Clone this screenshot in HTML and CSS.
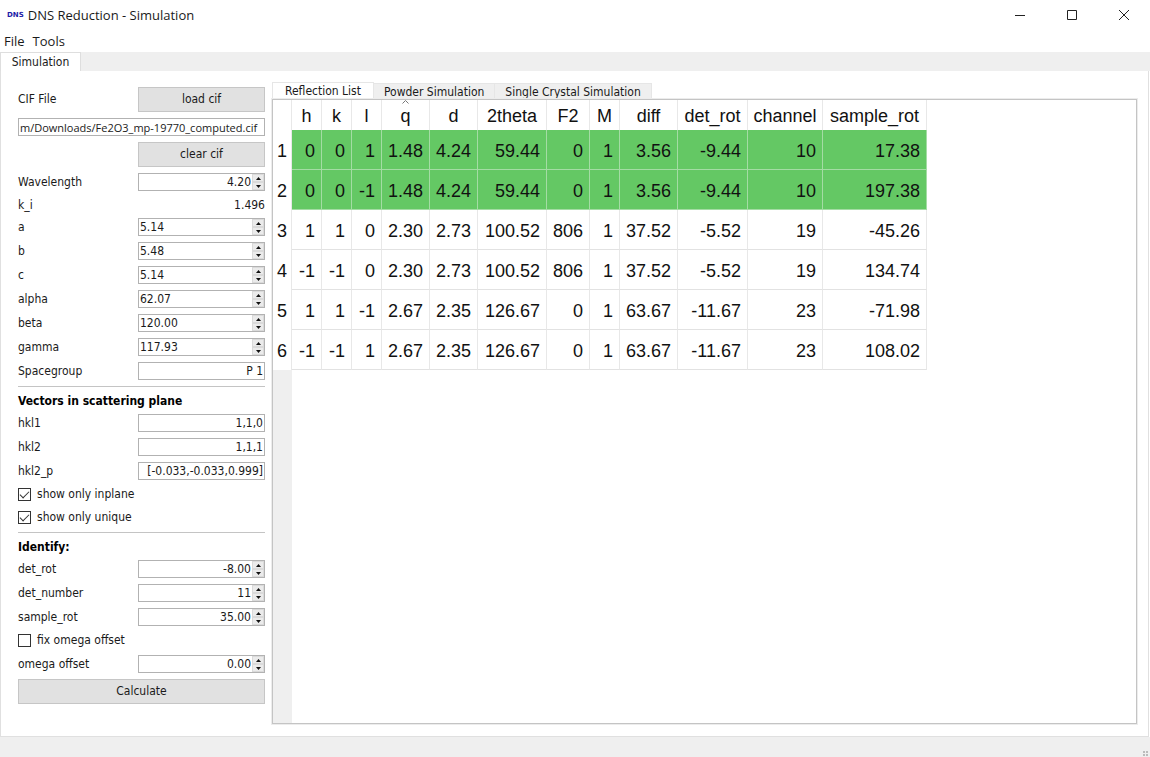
FILE: index.html
```html
<!DOCTYPE html>
<html lang="en">
<head>
<meta charset="utf-8">
<title>DNS Reduction - Simulation</title>
<link rel="stylesheet" href="styles.css">
</head>
<body>
<header class="titlebar">
  <span class="logo">DNS</span>
  <h1 class="title">DNS Reduction - Simulation</h1>
  <div class="window-buttons">
    <button class="window-button" aria-label="Minimize"><svg width="12" height="12" viewBox="0 0 12 12"><path d="M1 6.5h10"/></svg></button>
    <button class="window-button" aria-label="Maximize"><svg width="12" height="12" viewBox="0 0 12 12"><path d="M1.5 1.5h9v9h-9z"/></svg></button>
    <button class="window-button" aria-label="Close"><svg width="12" height="12" viewBox="0 0 12 12"><path d="M1 1l10 10M11 1L1 11"/></svg></button>
  </div>
</header>
<nav class="menubar">
  <button class="menu">File</button>
  <button class="menu">Tools</button>
</nav>
<div class="main-tabs" role="tablist">
  <button class="main-tab" role="tab" aria-selected="true">Simulation</button>
</div>
<main class="page">
  <form class="form">
    <div class="row"><label for="load">CIF File</label><button type="button" class="push" id="load">load cif</button></div>
    <input class="field path" aria-label="CIF path" value="m/Downloads/Fe2O3_mp-19770_computed.cif">
    <div class="row"><span></span><button type="button" class="push">clear cif</button></div>
    <div class="row"><label for="wavelength">Wavelength</label><div class="spin right"><input type="number" step="0.01" id="wavelength" value="4.20"><span class="steps"><button type="button" class="step" aria-label="Up"><svg viewBox="0 0 5 3"><path d="M0 3L2.500 0L5 3z"/></svg></button><button type="button" class="step" aria-label="Down"><svg viewBox="0 0 5 3"><path d="M0 0h5L2.500 3z"/></svg></button></span></div></div>
    <div class="row text-row"><span>k_i</span><output class="result">1.496</output></div>
    <div class="row"><label for="a">a</label><div class="spin"><input type="number" step="0.01" id="a" value="5.14"><span class="steps"><button type="button" class="step" aria-label="Up"><svg viewBox="0 0 5 3"><path d="M0 3L2.500 0L5 3z"/></svg></button><button type="button" class="step" aria-label="Down"><svg viewBox="0 0 5 3"><path d="M0 0h5L2.500 3z"/></svg></button></span></div></div>
    <div class="row"><label for="b">b</label><div class="spin"><input type="number" step="0.01" id="b" value="5.48"><span class="steps"><button type="button" class="step" aria-label="Up"><svg viewBox="0 0 5 3"><path d="M0 3L2.500 0L5 3z"/></svg></button><button type="button" class="step" aria-label="Down"><svg viewBox="0 0 5 3"><path d="M0 0h5L2.500 3z"/></svg></button></span></div></div>
    <div class="row"><label for="c">c</label><div class="spin"><input type="number" step="0.01" id="c" value="5.14"><span class="steps"><button type="button" class="step" aria-label="Up"><svg viewBox="0 0 5 3"><path d="M0 3L2.500 0L5 3z"/></svg></button><button type="button" class="step" aria-label="Down"><svg viewBox="0 0 5 3"><path d="M0 0h5L2.500 3z"/></svg></button></span></div></div>
    <div class="row"><label for="alpha">alpha</label><div class="spin"><input type="number" step="0.01" id="alpha" value="62.07"><span class="steps"><button type="button" class="step" aria-label="Up"><svg viewBox="0 0 5 3"><path d="M0 3L2.500 0L5 3z"/></svg></button><button type="button" class="step" aria-label="Down"><svg viewBox="0 0 5 3"><path d="M0 0h5L2.500 3z"/></svg></button></span></div></div>
    <div class="row"><label for="beta">beta</label><div class="spin"><input type="number" step="0.01" id="beta" value="120.00"><span class="steps"><button type="button" class="step" aria-label="Up"><svg viewBox="0 0 5 3"><path d="M0 3L2.500 0L5 3z"/></svg></button><button type="button" class="step" aria-label="Down"><svg viewBox="0 0 5 3"><path d="M0 0h5L2.500 3z"/></svg></button></span></div></div>
    <div class="row"><label for="gamma">gamma</label><div class="spin"><input type="number" step="0.01" id="gamma" value="117.93"><span class="steps"><button type="button" class="step" aria-label="Up"><svg viewBox="0 0 5 3"><path d="M0 3L2.500 0L5 3z"/></svg></button><button type="button" class="step" aria-label="Down"><svg viewBox="0 0 5 3"><path d="M0 0h5L2.500 3z"/></svg></button></span></div></div>
    <div class="row"><label for="spacegroup">Spacegroup</label><input class="field right" id="spacegroup" value="P 1"></div>
    <hr class="rule">
    <h2 class="heading">Vectors in scattering plane</h2>
    <div class="row"><label for="hkl1">hkl1</label><input class="field right" id="hkl1" value="1,1,0"></div>
    <div class="row"><label for="hkl2">hkl2</label><input class="field right" id="hkl2" value="1,1,1"></div>
    <div class="row"><label for="hkl2p">hkl2_p</label><input class="field right" id="hkl2p" value="[-0.033,-0.033,0.999]"></div>
    <label class="check"><input type="checkbox" checked>show only inplane</label>
    <label class="check"><input type="checkbox" checked>show only unique</label>
    <hr class="rule">
    <h2 class="heading">Identify:</h2>
    <div class="row"><label for="detrot">det_rot</label><div class="spin right"><input type="number" step="0.01" id="detrot" value="-8.00"><span class="steps"><button type="button" class="step" aria-label="Up"><svg viewBox="0 0 5 3"><path d="M0 3L2.500 0L5 3z"/></svg></button><button type="button" class="step" aria-label="Down"><svg viewBox="0 0 5 3"><path d="M0 0h5L2.500 3z"/></svg></button></span></div></div>
    <div class="row"><label for="detnumber">det_number</label><div class="spin right"><input type="number" id="detnumber" value="11"><span class="steps"><button type="button" class="step" aria-label="Up"><svg viewBox="0 0 5 3"><path d="M0 3L2.500 0L5 3z"/></svg></button><button type="button" class="step" aria-label="Down"><svg viewBox="0 0 5 3"><path d="M0 0h5L2.500 3z"/></svg></button></span></div></div>
    <div class="row"><label for="samplerot">sample_rot</label><div class="spin right"><input type="number" step="0.01" id="samplerot" value="35.00"><span class="steps"><button type="button" class="step" aria-label="Up"><svg viewBox="0 0 5 3"><path d="M0 3L2.500 0L5 3z"/></svg></button><button type="button" class="step" aria-label="Down"><svg viewBox="0 0 5 3"><path d="M0 0h5L2.500 3z"/></svg></button></span></div></div>
    <label class="check"><input type="checkbox">fix omega offset</label>
    <div class="row"><label for="omega">omega offset</label><div class="spin right"><input type="number" step="0.01" id="omega" value="0.00"><span class="steps"><button type="button" class="step" aria-label="Up"><svg viewBox="0 0 5 3"><path d="M0 3L2.500 0L5 3z"/></svg></button><button type="button" class="step" aria-label="Down"><svg viewBox="0 0 5 3"><path d="M0 0h5L2.500 3z"/></svg></button></span></div></div>
    <button type="button" class="push">Calculate</button>
  </form>
  <section class="results">
    <div class="tabs" role="tablist">
      <button class="tab selected" role="tab" aria-selected="true">Reflection List</button>
      <button class="tab" role="tab">Powder Simulation</button>
      <button class="tab" role="tab">Single Crystal Simulation</button>
    </div>
    <div class="sheet">
      <table class="grid">
        <colgroup><col class="w-index"><col class="w-hkl"><col class="w-hkl"><col class="w-hkl"><col class="w-q"><col class="w-q"><col class="w-theta"><col class="w-f2"><col class="w-hkl"><col class="w-diff"><col class="w-det"><col class="w-channel"><col class="w-sample"></colgroup>
        <thead>
          <tr><td></td><th>h</th><th>k</th><th>l</th><th class="sorted">q<svg class="sort" width="7" height="4" viewBox="0 0 7 4"><path d="M0.500 3.500l3-3l3 3"/></svg></th><th>d</th><th>2theta</th><th>F2</th><th>M</th><th>diff</th><th>det_rot</th><th>channel</th><th>sample_rot</th></tr>
        </thead>
        <tbody>
          <tr class="match"><th>1</th><td>0</td><td>0</td><td>1</td><td>1.48</td><td>4.24</td><td>59.44</td><td>0</td><td>1</td><td>3.56</td><td>-9.44</td><td>10</td><td>17.38</td></tr>
          <tr class="match"><th>2</th><td>0</td><td>0</td><td>-1</td><td>1.48</td><td>4.24</td><td>59.44</td><td>0</td><td>1</td><td>3.56</td><td>-9.44</td><td>10</td><td>197.38</td></tr>
          <tr><th>3</th><td>1</td><td>1</td><td>0</td><td>2.30</td><td>2.73</td><td>100.52</td><td>806</td><td>1</td><td>37.52</td><td>-5.52</td><td>19</td><td>-45.26</td></tr>
          <tr><th>4</th><td>-1</td><td>-1</td><td>0</td><td>2.30</td><td>2.73</td><td>100.52</td><td>806</td><td>1</td><td>37.52</td><td>-5.52</td><td>19</td><td>134.74</td></tr>
          <tr><th>5</th><td>1</td><td>1</td><td>-1</td><td>2.67</td><td>2.35</td><td>126.67</td><td>0</td><td>1</td><td>63.67</td><td>-11.67</td><td>23</td><td>-71.98</td></tr>
          <tr><th>6</th><td>-1</td><td>-1</td><td>1</td><td>2.67</td><td>2.35</td><td>126.67</td><td>0</td><td>1</td><td>63.67</td><td>-11.67</td><td>23</td><td>108.02</td></tr>
        </tbody>
      </table>
      <div class="gutter"></div>
    </div>
  </section>
</main>
<footer class="statusbar"><svg width="6" height="6" viewBox="0 0 6 6"><path d="M3 0h2v2h-2zM0 0h2v2h-2zM0 3h2v2h-2zM3 3h2v2h-2z"/></svg></footer>
</body>
</html>
```
FILE: styles.css
```css
* { box-sizing: border-box; }

body {
  margin: 0;
  min-height: 100vh;
  display: flex;
  flex-direction: column;
  background: #fff;
  color: #1a1a1a;
  font: 12px/15px "DejaVu Sans Condensed", "Noto Sans", sans-serif;
}

button, input {
  font: inherit;
  color: inherit;
  border: 0;
  padding: 0;
  margin: 0;
  background: none;
  border-radius: 0;
}

.titlebar {
  display: flex;
  align-items: center;
  height: 29px;
  padding-left: 7px;
  gap: 4px;
}
.logo { font: bold 7px/8px "DejaVu Sans", sans-serif; color: #1c1ca8; }
.title { margin: 0; font: 13px/16px "Open Sans", sans-serif; }
.window-buttons { display: flex; margin-left: auto; height: 28px; }
.window-button { width: 52px; display: grid; place-items: center; }
.window-button svg { fill: none; stroke: #222; }

.menubar { display: flex; gap: 8px; height: 23px; padding: 2px 4px 0; }
.menu { font: 13px/21px "Open Sans", sans-serif; }

.main-tabs { display: flex; height: 19px; background: #efefef; }
.main-tab {
  width: 81px;
  background: #fff;
  border: 1px solid #dedede;
  border-bottom: 0;
}

.page {
  flex: 1;
  display: flex;
  gap: 7px;
  padding: 11px 11px 12px 17px;
  border: 1px solid #e0e0e0;
  border-top: 0;
  margin-right: 1px;
}

.form {
  width: 247px;
  flex: none;
  display: flex;
  flex-direction: column;
  gap: 6px;
  padding-top: 5px;
}
.row {
  display: grid;
  grid-template-columns: 1fr 127px;
  align-items: center;
}
.text-row { height: 15px; line-height: 17px; }
.result { text-align: right; }

.push { height: 25px; background: #e1e1e1; border: 1px solid #c6c6c6; }
.field, .spin { height: 18px; border: 1px solid #b2b2b2; background: #fff; width: 100%; }
.field { padding: 0 1px; }
.path { font-family: "Open Sans", sans-serif; font-size: 11px; }
.right, .right input { text-align: right; }
.spin { display: flex; }
.spin input {
  flex: 1;
  min-width: 0;
  padding: 0 1px;
  appearance: textfield;
  -moz-appearance: textfield;
}
.spin input::-webkit-inner-spin-button { appearance: none; margin: 0; }
.steps { width: 12px; display: flex; flex-direction: column; background: #ebebeb; }
.step { flex: 1; display: grid; place-items: center; border: 1px solid #dadada; min-height: 0; }
.step svg { width: 5px; height: 3px; fill: #111; }

.rule { width: 100%; height: 1px; margin: 0; border: 0; background: #c4c4c4; }
.heading { margin: 0; height: 15px; font-size: 12px; line-height: 17px; color: #000; }

.check { display: flex; align-items: center; gap: 6px; height: 17px; }
.check input {
  appearance: none;
  width: 13px;
  height: 13px;
  border: 1px solid #333;
  background: #fff;
  display: grid;
  place-items: center;
}
.check input:checked::before {
  content: "";
  width: 8px;
  height: 4px;
  border: solid #333;
  border-width: 0 0 1px 1px;
  transform: translateY(-1px) rotate(-45deg);
}

.results { flex: 1; min-width: 0; display: flex; flex-direction: column; }
.tabs { display: flex; align-items: flex-end; height: 17px; }
.tab {
  height: 16px;
  padding: 1px 10px 0;
  background: #efefef;
  border: solid #e6e6e6;
  border-width: 1px 1px 0 0;
  white-space: nowrap;
}
.tab.selected { height: 17px; padding: 0 12px; background: #fff; border-left-width: 1px; }

.sheet {
  flex: 1;
  display: flex;
  flex-direction: column;
  border: 1px solid #c4c4c4;
  box-shadow: 0 0 0 1px #ececec;
  overflow: hidden;
}
.gutter { flex: 1; width: 19px; background: #efefef; }

.grid {
  table-layout: fixed;
  width: 654px;
  border-collapse: separate;
  border-spacing: 0;
  font: 18px/20px "Liberation Sans", Arial, sans-serif;
  color: #111;
}
.grid th { font-weight: normal; padding: 0; text-align: center; }
.grid td { text-align: right; padding: 0 6px 0 0; }
.grid thead tr { height: 30px; }
.grid thead th { padding-top: 2px; }
.grid tbody tr { height: 40px; }
.grid th, .grid td { border-right: 1px solid #e8e8e8; }
.grid tbody td, .grid tbody th { padding-top: 2px; }
.grid tbody td { border-bottom: 1px solid #e2e2e2; }
.grid .match td { background: #64c864; border-color: #a4dca4; }
.sorted { position: relative; }
.sort { position: absolute; top: 0; left: 50%; margin-left: -4px; fill: none; stroke: #777; }

.w-index { width: 19px; }
.w-hkl { width: 30px; }
.w-q { width: 48px; }
.w-theta { width: 69px; }
.w-f2 { width: 43px; }
.w-diff { width: 58px; }
.w-det { width: 70px; }
.w-channel { width: 75px; }
.w-sample { width: 104px; }

.statusbar {
  display: flex;
  justify-content: flex-end;
  align-items: flex-end;
  height: 20px;
  padding: 0 1px 0 0;
  background: #efefef;
}
.statusbar svg { fill: #bbb; }
```
